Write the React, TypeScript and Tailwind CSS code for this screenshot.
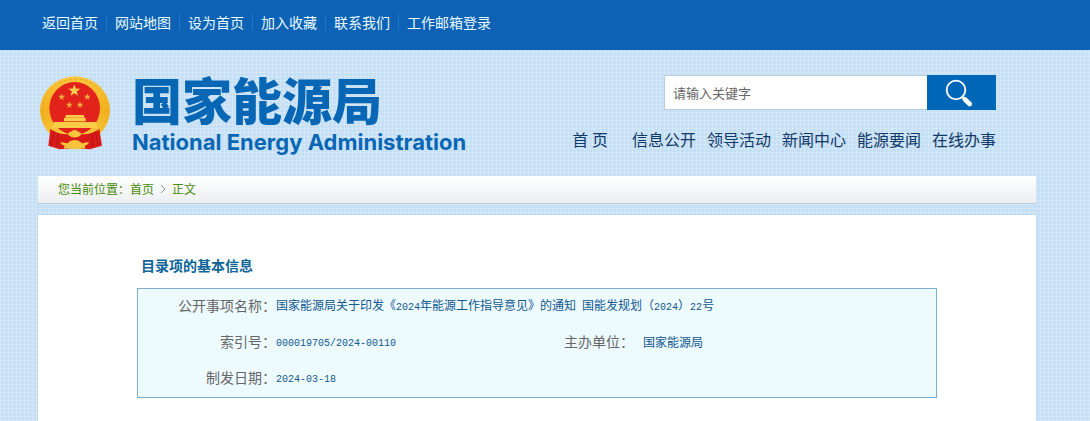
const topLinks = ['返回首页', '网站地图', '设为首页', '加入收藏', '联系我们', '工作邮箱登录'];
const navLinks = ['信息公开', '领导活动', '新闻中心', '能源要闻', '在线办事'];

function starPoints(cx: number, cy: number, r: number) {
    return Array.from({ length: 10 }, (_, i) => {
        const radius = i % 2 === 0 ? r : r * 0.4;
        const angle = (Math.PI / 5) * i - Math.PI / 2;
        return `${cx + radius * Math.cos(angle)},${cy + radius * Math.sin(angle)}`;
    }).join(' ');
}

function Emblem() {
    return (
        <svg viewBox="30 32 210 222" className="mt-1 h-[74px] w-[70px] shrink-0" aria-hidden="true">
            <defs>
                <linearGradient id="gold" x1="0" y1="0" x2="0" y2="1">
                    <stop offset="0" stopColor="#fbc63c" />
                    <stop offset="0.5" stopColor="#f2b01f" />
                    <stop offset="1" stopColor="#f9cf45" />
                </linearGradient>
            </defs>
            <ellipse cx="135" cy="135" rx="105" ry="102" fill="url(#gold)" />
            <ellipse cx="135" cy="135" rx="97" ry="94" fill="none" stroke="#eba725" strokeWidth="3" strokeDasharray="7 9" />
            <ellipse cx="134" cy="129" rx="76" ry="79" fill="#e2231b" />
            <polygon points={starPoints(133, 76, 19)} fill="#f8cf4e" />
            <g fill="#f0a83c">
                <polygon points={starPoints(95, 95, 11)} />
                <polygon points={starPoints(172, 95, 11)} />
                <polygon points={starPoints(118, 119, 11)} />
                <polygon points={starPoints(150, 119, 11)} />
            </g>
            {/* Gate */}
            <g fill="#f8ce48">
                <path d="M108 149h53l3 8h-59z" />
                <path d="M102 158h65v10h-65z" />
                <path d="M72 170h126l5 18H66z" />
            </g>
            {/* Ribbon */}
            <path d="M61 190c15 12 35 17 53 17h40c20 0 40-5 54-17l8 51-36 11-45-4-46 4-34-11z" fill="#d81a18" />
            <path d="M72 198l-8 42M84 205l-3 40M196 198l9 42M185 205l4 40" stroke="#b81317" strokeWidth="3" fill="none" />
            <g fill="#f8c43b">
                <path d="M114 206c3-8 10-6 13-10 4-3 10-3 14 0 3 4 10 2 13 10-4 9-11 12-20 12s-16-3-20-12z" />
                <path d="M91 231c15 1 25 4 31 8-9 5-16 9-18 12-3-4-1-8 0-10-6-1-11-5-13-10zM177 231c-15 1-25 4-31 8 9 5 16 9 18 12 3-4 1-8 0-10 6-1 11-5 13-10z" />
                <path d="M106 249c4-16 14-25 28-25s25 9 29 25c-18 3-39 3-57 0z" />
            </g>
            <path d="M116 212q18 12 37 0" fill="none" stroke="#d81a18" strokeWidth="3" />
        </svg>
    );
}

function Num({ children }: { children: string }) {
    return <span className="font-['Liberation_Mono',monospace] text-[10px]">{children}</span>;
}

function TopBar() {
    return (
        <div className="bg-[#0e62b6] pr-4">
            <nav className="mx-auto flex h-[50px] max-w-[998px] items-center pb-1.5 pl-1 text-sm text-[#e8fbff]">
                {topLinks.map((label, i) => (
                    <div key={label} className="flex items-center">
                        {i > 0 && <span className="mx-2 h-4 w-px bg-[#1e78cc]" />}
                        <a href="#">{label}</a>
                    </div>
                ))}
            </nav>
        </div>
    );
}

function Header() {
    return (
        <header className="flex h-[126px] items-start justify-between pr-10 pl-0.5">
            <div className="flex pt-[22px]">
                <Emblem />
                <div className="ml-[22px] text-[#0867b5]">
                    <h1 className="text-[50px] leading-[52px] font-black">国家能源局</h1>
                    <p className="mt-1 font-['Inter',sans-serif] text-[22px] leading-7 font-bold">National Energy Administration</p>
                </div>
            </div>

            <div className="flex flex-col items-end pt-[25px]">
                <form className="flex h-[35px]" onSubmit={(e) => e.preventDefault()}>
                    <input
                        type="text"
                        aria-label="关键字"
                        placeholder="请输入关键字"
                        className="w-[263px] border border-r-0 border-[#b9cede] bg-white px-2 text-[13px] text-[#666] placeholder:text-[#666] focus:outline-none"
                    />
                    <button type="submit" aria-label="搜索" className="flex w-[69px] cursor-pointer items-center bg-[#0067b8] pl-[18px]">
                        <svg viewBox="0 0 28 28" className="h-7 w-7" fill="none" stroke="#fff">
                            <circle cx="11" cy="11" r="9.3" strokeWidth="1.8" />
                            <path d="M17.5 18l2.5 2.5" strokeWidth="2.5" />
                            <path d="M20 20.5l4.7 4.5" strokeWidth="4.6" strokeLinecap="round" />
                        </svg>
                    </button>
                </form>
                <nav className="mt-[17px] flex text-base text-[#123a68]">
                    <a href="#" className="mr-6">首 页</a>
                    <div className="flex gap-[11px]">
                        {navLinks.map((label) => (
                            <a key={label} href="#">{label}</a>
                        ))}
                    </div>
                </nav>
            </div>
        </header>
    );
}

function InfoTable() {
    return (
        <table className="w-full table-fixed border-separate border-spacing-0 border border-[#7cafcf] bg-[#edfbff] text-xs text-[#12578f]">
            <colgroup>
                <col className="w-[138px]" />
                <col className="w-[288px]" />
                <col className="w-[79px]" />
                <col />
            </colgroup>
            <tbody className="[&_td]:pb-0.5 [&_th]:pb-1 [&_th]:text-sm [&_th]:font-normal [&_th]:text-[#666]">
                <tr className="h-9">
                    <th scope="row" className="text-right">公开事项名称：</th>
                    <td colSpan={3}>
                        国家能源局关于印发《<Num>2024</Num>年能源工作指导意见》的通知<Num> </Num>国能发规划（<Num>2024</Num>）<Num>22</Num>号
                    </td>
                </tr>
                <tr className="h-9">
                    <th scope="row" className="text-right">索引号：</th>
                    <td><Num>000019705/2024-00110</Num></td>
                    <th scope="row" className="text-left">主办单位：</th>
                    <td>国家能源局</td>
                </tr>
                <tr className="h-9">
                    <th scope="row" className="text-right">制发日期：</th>
                    <td colSpan={3}><Num>2024-03-18</Num></td>
                </tr>
            </tbody>
        </table>
    );
}

function App() {
    return (
        <div className="flex min-h-screen flex-col bg-[#c5dff5] bg-[linear-gradient(#ffffff30_1px,transparent_1px),linear-gradient(90deg,#ffffff30_1px,transparent_1px)] bg-[size:4px_4px] font-['Noto_Sans_CJK_SC',sans-serif]">
            <TopBar />
            <div className="flex flex-1 flex-col pr-4">
                <div className="mx-auto flex w-full max-w-[998px] flex-1 flex-col">
                    <Header />

                    {/* Breadcrumb */}
                    <nav className="flex h-7 items-center border-b border-[#bccfdf] bg-linear-to-b from-white to-[#eceff2] pb-0.5 pl-5 text-xs text-[#4a8a0c]">
                        <span>您当前位置：</span>
                        <a href="#">首页</a>
                        <svg viewBox="0 0 6 10" className="mx-1.5 h-2.5 w-1.5" fill="none" stroke="#7f9a80">
                            <path d="M1 1l4 4-4 4" />
                        </svg>
                        <span>正文</span>
                    </nav>

                    <main className="mt-[11px] flex-1 bg-white px-[99px] pt-[38px] pb-6 shadow-[0_0_1px_#9db4c8]">
                        <h2 className="mb-2.5 pl-1 text-sm leading-[25px] font-bold text-[#0d6597]">目录项的基本信息</h2>
                        <InfoTable />
                    </main>
                </div>
            </div>
        </div>
    );
}

export default App;
